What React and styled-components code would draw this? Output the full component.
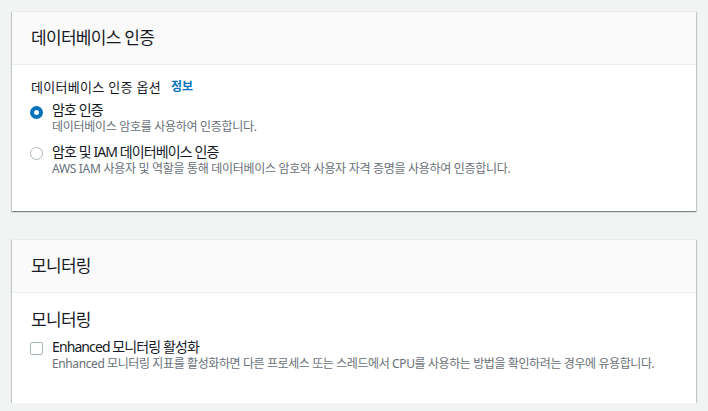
import React from "react";
import styled, { createGlobalStyle } from "styled-components";

const GlobalStyle = createGlobalStyle`
  html, body {
    margin: 0;
    padding: 0;
    background: #f2f3f3;
  }
  body {
    font-family: "Noto Sans", "Noto Sans CJK KR", sans-serif;
    color: #16191f;
  }
`;

const Page = styled.div`
  padding: 12px 12px 0 12px;
  display: flex;
  flex-direction: column;
  gap: 29px;
`;

const Card = styled.section`
  background: #ffffff;
  box-shadow: 0 1px 1px 0 rgba(0, 28, 36, 0.3),
    1px 1px 1px 0 rgba(0, 28, 36, 0.15), -1px 1px 1px 0 rgba(0, 28, 36, 0.15);
  border-top: 1px solid #eaeded;
  margin-top: -1px;
`;

const CardHeader = styled.header`
  background: #fafafa;
  border-bottom: 1px solid #eaeded;
  padding: 14px 19px;
  font-size: 17px;
  line-height: 24px;
  letter-spacing: -0.7px;
  font-weight: 400;
`;

const CardBody = styled.div`
  padding: ${(p) => p.$pad || "12px 19px 35px 19px"};
  display: flex;
  flex-direction: column;
`;

const FieldLabel = styled.div`
  font-size: 13px;
  line-height: 20px;
  letter-spacing: 0.3px;
  display: flex;
  align-items: center;
`;

const InfoLink = styled.a`
  color: #0073bb;
  font-size: 12px;
  font-weight: 700;
  letter-spacing: 0;
  margin-left: 10px;
  text-decoration: none;
`;

const SubHeading = styled.h3`
  margin: 0;
  font-size: 17px;
  line-height: 24px;
  letter-spacing: -0.7px;
  font-weight: 400;
`;

const Options = styled.div`
  display: flex;
  flex-direction: column;
  gap: 9px;
  margin-top: ${(p) => p.$top || "4px"};
`;

const Option = styled.label`
  display: grid;
  grid-template-columns: 21px 1fr;
  align-items: start;
`;

const Radio = styled.span`
  box-sizing: border-box;
  width: 13px;
  height: 13px;
  border-radius: 50%;
  margin: ${(p) => (p.$checked ? "5px" : "4px")} 0 0 -1px;
  background: #ffffff;
  border: ${(p) => (p.$checked ? "4px solid #0073bb" : "1.5px solid #aab7b8")};
`;

const Checkbox = styled.span`
  box-sizing: border-box;
  width: 13px;
  height: 13px;
  border-radius: 2px;
  margin: 4px 0 0 -1px;
  background: #ffffff;
  border: 1.5px solid #aab7b8;
`;

const OptionText = styled.div`
  display: flex;
  flex-direction: column;
`;

const OptionLabel = styled.span`
  font-size: 14px;
  line-height: 18px;
  letter-spacing: -0.9px;
`;

const Description = styled.span`
  font-size: 12px;
  line-height: 15px;
  letter-spacing: ${(p) => p.$tight ? "-0.4px" : "-0.3px"};
  color: #687078;
`;

export default function App() {
  return (
    <>
      <GlobalStyle />
      <Page>
        <Card>
          <CardHeader>데이터베이스 인증</CardHeader>
          <CardBody>
            <FieldLabel>
              데이터베이스 인증 옵션
              <InfoLink href="#">정보</InfoLink>
            </FieldLabel>
            <Options>
              <Option>
                <Radio $checked />
                <OptionText>
                  <OptionLabel>암호 인증</OptionLabel>
                  <Description>데이터베이스 암호를 사용하여 인증합니다.</Description>
                </OptionText>
              </Option>
              <Option>
                <Radio />
                <OptionText>
                  <OptionLabel>암호 및 IAM 데이터베이스 인증</OptionLabel>
                  <Description>
                    AWS IAM 사용자 및 역할을 통해 데이터베이스 암호와 사용자 자격
                    증명을 사용하여 인증합니다.
                  </Description>
                </OptionText>
              </Option>
            </Options>
          </CardBody>
        </Card>
        <Card>
          <CardHeader>모니터링</CardHeader>
          <CardBody $pad="15px 19px 32px 19px">
            <SubHeading>모니터링</SubHeading>
            <Options $top="6px">
              <Option>
                <Checkbox />
                <OptionText>
                  <OptionLabel>Enhanced 모니터링 활성화</OptionLabel>
                  <Description $tight>
                    Enhanced 모니터링 지표를 활성화하면 다른 프로세스 또는
                    스레드에서 CPU를 사용하는 방법을 확인하려는 경우에 유용합니다.
                  </Description>
                </OptionText>
              </Option>
            </Options>
          </CardBody>
        </Card>
      </Page>
    </>
  );
}
